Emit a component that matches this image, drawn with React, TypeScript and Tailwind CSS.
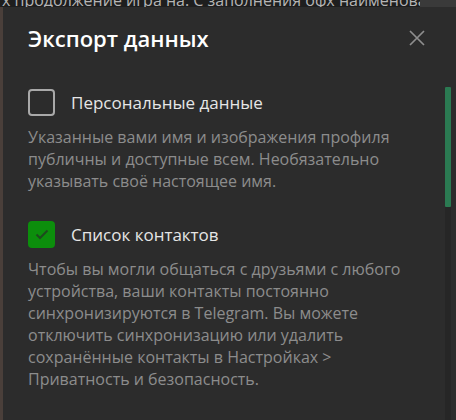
import React, { useState } from 'react';

const items = [
  {
    id: 'personal',
    title: 'Персональные данные',
    text: 'Указанные вами имя и изображения профиля публичны и доступные всем. Необязательно указывать своё настоящее имя.',
    checked: false,
  },
  {
    id: 'contacts',
    title: 'Список контактов',
    text: 'Чтобы вы могли общаться с друзьями с любого устройства, ваши контакты постоянно синхронизируются в Telegram. Вы можете отключить синхронизацию или удалить сохранённые контакты в Настройках > Приватность и безопасность.',
    checked: true,
  },
];

export default function App() {
  const [state, setState] = useState(items);

  const toggle = (id: string) => {
    setState(prev => prev.map(i => (i.id === id ? { ...i, checked: !i.checked } : i)));
  };

  return (
    <div
      className="h-[420px] w-[456px] overflow-hidden bg-[#1e1e1e] flex flex-col"
      style={{ fontFamily: '"Open Sans", "Noto Sans", sans-serif' }}
    >
      {/* Background behind the dialog */}
      <div className="h-[7px] overflow-hidden flex shrink-0">
        <div className="flex-1 overflow-hidden">
          <p className="-mt-[10px] pl-[2px] text-[16px] leading-[20px] text-[#b5b5b5] whitespace-nowrap">
            х продолжение игра на. С заполнения офх наименования
          </p>
        </div>
        <div className="w-[36px] bg-[#3a3a3a]" />
      </div>

      <div className="flex flex-1 min-h-0">
        <div className="w-[3px] bg-[#4a3f3a]" />
        {/* Dialog */}
        <div className="flex-1 bg-[#2c2c2c] flex">
          <div className="flex-1 pl-[25px] pr-[20px]">
            {/* Header */}
            <div className="flex items-center justify-between h-[62px]">
              <h1 className="text-[22px] font-semibold text-white leading-none">Экспорт данных</h1>
              <button className="text-[#8e8e8e]">
                <svg width="16" height="16" viewBox="0 0 16 16" fill="none" stroke="currentColor" strokeWidth="1.7">
                  <path d="M1 1L15 15M15 1L1 15" />
                </svg>
              </button>
            </div>

            {/* Options */}
            <div className="mt-[20px] flex flex-col gap-[29px]">
              {state.map(item => (
                <div key={item.id}>
                  <button onClick={() => toggle(item.id)} className="flex items-center gap-[16px]">
                    {item.checked ? (
                      <span className="w-[27px] h-[27px] rounded-[4px] bg-[#0c8e0c] flex items-center justify-center">
                        <svg width="14" height="11" viewBox="0 0 14 11" fill="none" stroke="#1e4a1e" strokeWidth="2">
                          <path d="M1.5 5.5L5 9L12.5 1.5" />
                        </svg>
                      </span>
                    ) : (
                      <span className="w-[27px] h-[27px] rounded-[4px] border-2 border-[#a9a9a9]" />
                    )}
                    <span className="text-[17px] text-[#e6e6e6]">{item.title}</span>
                  </button>
                  <p className="mt-[10px] w-[384px] text-[16px] leading-[22px] text-[#8c8c8c]">{item.text}</p>
                </div>
              ))}
            </div>
          </div>

          {/* Scrollbar */}
          <div className="w-[6px] mr-[5px] mt-[80px] bg-[#262626] flex flex-col">
            <div className="h-[120px] rounded-[1px] bg-[#2b7a52]" />
          </div>
        </div>
      </div>
    </div>
  );
}
